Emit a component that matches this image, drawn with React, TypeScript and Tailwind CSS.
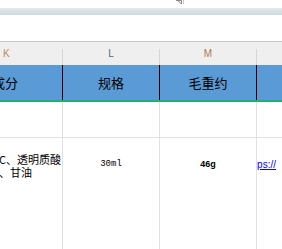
import React from 'react';

const cjk = { fontFamily: '"Microsoft YaHei", "Noto Sans CJK SC", sans-serif' };

export default function App() {
  return (
    <div className="w-[282px] h-[249px] overflow-hidden bg-white relative" style={cjk}>
      {/* ribbon bottom strip */}
      <div className="h-[8px] flex">
        <div className="w-[175px]" />
        <div className="w-[8px] h-[4px] flex items-start justify-center">
          <svg width="6" height="4" viewBox="0 0 6 4">
            <path d="M0 0.5H5.5V4" fill="none" stroke="#8a8a8a" strokeWidth="1" />
            <path d="M1.5 0.5L5 3.5" stroke="#8a8a8a" strokeWidth="1" />
          </svg>
        </div>
        <div className="w-[1px] h-[4px] bg-[#c8c8c8]" />
      </div>
      <div className="h-[7px] bg-gradient-to-b from-[#e4eaef] to-[#cfd8df]" />
      {/* formula / blank area */}
      <div className="h-[27px] bg-white border-b border-[#c6c6c6]" />
      {/* column letters */}
      <div className="h-[23px] bg-[#efefef] flex text-[10px] text-[#4f6a8a]" style={{ fontFamily: '"Liberation Sans", sans-serif' }}>
        <div className="w-[63px] flex items-center pl-[3px] border-r border-[#d6d6d6] mt-[7px] pb-[7px] text-[#c08a55]">K</div>
        <div className="w-[97px] flex items-center justify-center border-r border-[#d6d6d6] mt-[7px] pb-[7px]">L</div>
        <div className="w-[97px] flex items-center justify-center border-r border-[#d6d6d6] mt-[7px] pb-[7px] text-[#b07a50]">M</div>
        <div className="flex-1" />
      </div>
      {/* header row */}
      <div className="h-[37px] bg-[#5b9bd5] flex text-[13px] text-black border-b-2 border-[#21b26a]">
        <div className="w-[63px] border-r border-black flex items-center overflow-hidden">
          <span className="whitespace-nowrap ml-[-8px]">成分</span>
        </div>
        <div className="w-[97px] border-r border-black flex items-center justify-center">规格</div>
        <div className="w-[97px] border-r border-black flex items-center justify-center">毛重约</div>
        <div className="flex-1" />
      </div>
      {/* empty row */}
      <div className="h-[36px] flex border-b border-[#e1e1e1]">
        <div className="w-[63px] border-r border-[#e1e1e1]" />
        <div className="w-[97px] border-r border-[#e1e1e1]" />
        <div className="w-[97px] border-r border-[#e1e1e1]" />
        <div className="flex-1" />
      </div>
      {/* data row */}
      <div className="h-[120px] flex text-[9px] text-black">
        <div className="w-[63px] border-r border-[#e1e1e1] overflow-hidden pt-[15px]">
          <div className="ml-[-12px] text-[11px] leading-[13px] whitespace-nowrap" style={{ fontFamily: '"Noto Sans CJK SC", sans-serif' }}>
            <div>维C、透明质酸</div>
            <div>钠、甘油</div>
          </div>
        </div>
        <div className="w-[97px] border-r border-[#e1e1e1] flex justify-center pt-[20px]" style={{ fontFamily: '"Liberation Mono", monospace' }}>30ml</div>
        <div className="w-[97px] border-r border-[#e1e1e1] flex justify-center pt-[20px] font-bold" style={{ fontFamily: '"Liberation Sans", sans-serif' }}>46g</div>
        <div className="flex-1 overflow-hidden pt-[19px]">
          <span className="ml-[-11px] text-[10px] text-[#0000ff] underline whitespace-nowrap" style={{ fontFamily: '"Liberation Sans", sans-serif' }}>https://</span>
        </div>
      </div>
    </div>
  );
}
